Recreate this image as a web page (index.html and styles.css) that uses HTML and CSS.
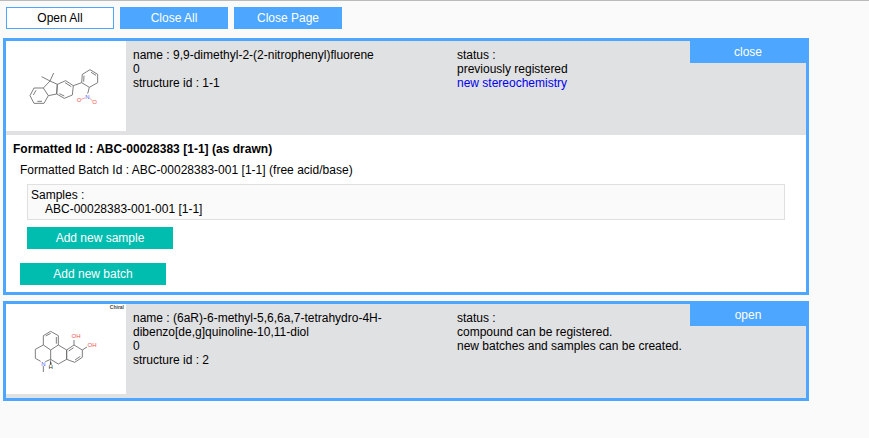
FILE: index.html
```html
<!DOCTYPE html>
<html lang="en">
<head>
    <meta charset="UTF-8">
    <meta name="viewport" content="width=device-width, initial-scale=1.0">
    <title>Register Compounds</title>
    <link rel="stylesheet" href="styles.css">
</head>
<body>
    <div class="toolbar">
        <button class="btn btn-outline">Open All</button>
        <button class="btn btn-blue">Close All</button>
        <button class="btn btn-blue">Close Page</button>
    </div>

    <!-- Compound 1 -->
    <div class="card">
        <button class="btn-toggle">close</button>
        <div class="card-head">
            <div class="structure">
                <svg class="mol" width="120" height="90" viewBox="-12 -12 360 270">
                    <g class="bonds">
                        <polygon points="60,152 72,129 100,129 115,152 102,175 72,175"/>
                        <polyline points="100,129 120,108 142,118 140,147 115,152"/>
                        <polyline points="95,95 120,108 131,84"/>
                        <polygon points="142,118 167,107 190,122 187,150 163,160 140,147"/>
                        <polyline points="190,122 215,113"/>
                        <polygon points="240,74 263,88 263,113 238,127 215,113 217,88"/>
                        <polyline points="238,127 233,146"/>
                        <polyline points="70,150 78,136"/>
                        <polyline points="82,169 96,169"/>
                        <polyline points="148,146 163,153"/>
                        <polyline points="165,113 184,125"/>
                        <polyline points="243,82 258,91"/>
                        <polyline points="221,110 222,92"/>
                    </g>
                    <g class="bonds-red">
                        <polyline points="225,159 214,163"/>
                        <polyline points="239,160 248,167"/>
                    </g>
                    <text class="atom atom-n" x="232" y="162" text-anchor="middle">N</text>
                    <text class="atom atom-o" x="207" y="171" text-anchor="middle">O</text>
                    <text class="atom atom-o" x="254" y="178" text-anchor="middle">O</text>
                </svg>
            </div>
            <div class="info-name">
                name : 9,9-dimethyl-2-(2-nitrophenyl)fluorene<br>
                0<br>
                structure id : 1-1
            </div>
            <div class="info-status">
                status :<br>
                previously registered<br>
                <span class="stereo">new stereochemistry</span>
            </div>
        </div>
        <div class="card-body">
            <div class="formatted-id">Formatted Id : ABC-00028383 [1-1] (as drawn)</div>
            <div class="batch">
                <div class="batch-id">Formatted Batch Id : ABC-00028383-001 [1-1] (free acid/base)</div>
                <div class="samples">
                    Samples :
                    <div class="sample-row">ABC-00028383-001-001 [1-1]</div>
                </div>
                <button class="btn-add btn-add-sample">Add new sample</button>
            </div>
            <button class="btn-add btn-add-batch">Add new batch</button>
        </div>
    </div>

    <!-- Compound 2 -->
    <div class="card">
        <button class="btn-toggle">open</button>
        <div class="card-head">
            <div class="structure">
                <span class="chiral">Chiral</span>
                <svg class="mol" width="120" height="90" viewBox="18 12 360 270">
                    <g class="bonds">
                        <polygon points="130,107 152,94 175,107 175,135 152,150 130,135"/>
                        <polyline points="130,135 106,148 106,175 122,184"/>
                        <polyline points="136,185 152,178 152,150"/>
                        <polyline points="130,198 130,216"/>
                        <polyline points="175,135 200,150 200,178 175,192 152,178"/>
                        <polygon points="200,150 222,135 247,150 247,172 224,187 200,178"/>
                        <polyline points="222,135 222,120"/>
                        <polyline points="247,150 261,141"/>
                        <polyline points="137,108 152,100"/>
                        <polyline points="169,111 169,131"/>
                        <polyline points="206,153 221,143"/>
                        <polyline points="241,169 225,180"/>
                    </g>
                    <polygon class="wedge" points="152,178 149,194 155,194"/>
                    <text class="atom atom-n" x="130" y="197" text-anchor="middle">N</text>
                    <text class="atom atom-h" x="152" y="206" text-anchor="middle">H</text>
                    <text class="atom atom-oh" x="228" y="114" text-anchor="middle">OH</text>
                    <text class="atom atom-oh" x="276" y="140" text-anchor="middle">OH</text>
                </svg>
            </div>
            <div class="info-name">
                name : (6aR)-6-methyl-5,6,6a,7-tetrahydro-4H-dibenzo[de,g]quinoline-10,11-diol<br>
                0<br>
                structure id : 2
            </div>
            <div class="info-status">
                status :<br>
                compound can be registered.<br>
                new batches and samples can be created.
            </div>
        </div>
    </div>
</body>
</html>
```

FILE: styles.css
```css
body {
    margin: 0;
    background: #fafafa;
    border-top: 1px solid #bbbbbb;
    font-family: "Liberation Sans", Arial, sans-serif;
    font-size: 12px;
    line-height: 14px;
    color: #000;
}
.toolbar {
    display: flex;
    gap: 6px;
    padding: 6px 6px 9px;
}
.btn {
    width: 108px;
    height: 22px;
    padding: 0;
    font-family: inherit;
    font-size: 12px;
    cursor: pointer;
}
.btn-outline {
    background: #fff;
    border: 1px solid #4da6ff;
    color: #000;
}
.btn-blue {
    background: #4da6ff;
    border: none;
    color: #fff;
}
.card {
    position: relative;
    width: 800px;
    margin: 0 0 6px 3px;
    border: 3px solid #4da6ff;
    background: #fff;
}
.btn-toggle {
    position: absolute;
    top: -3px;
    right: -3px;
    width: 119px;
    height: 25px;
    padding: 2px 3px 0 0;
    border: none;
    background: #4da6ff;
    color: #fff;
    font-family: inherit;
    font-size: 12px;
    cursor: pointer;
}
.card-head {
    display: flex;
    height: 94px;
    background: #e0e1e3;
}
.structure {
    position: relative;
    width: 120px;
    height: 90px;
    background: #fff;
}
.mol {
    display: block;
}
.mol .bonds {
    fill: none;
    stroke: #6a6a6a;
    stroke-width: 2.6;
}
.mol .bonds-red {
    fill: none;
    stroke: #e99;
    stroke-width: 2.6;
}
.mol .wedge {
    fill: #444;
}
.mol .atom {
    font-size: 18px;
    font-family: "Liberation Sans", Arial, sans-serif;
}
.mol .atom-n {
    fill: #5555ee;
}
.mol .atom-h {
    fill: #333;
}
.mol .atom-o,
.mol .atom-oh {
    fill: #ee5555;
}
.chiral {
    position: absolute;
    top: 0;
    right: 2px;
    font-size: 5px;
    font-weight: bold;
    line-height: 7px;
    color: #444;
}
.info-name {
    width: 268px;
    margin-left: 7px;
    padding-top: 7px;
}
.info-status {
    margin-left: 56px;
    padding-top: 7px;
}
.stereo {
    color: #0000ee;
}
.card-body {
    padding: 7px 0 7px 7px;
}
.formatted-id {
    font-weight: bold;
    letter-spacing: 0.02px;
}
.batch {
    margin-top: 7px;
    padding-left: 7px;
}
.batch-id {
    letter-spacing: 0.02px;
}
.samples {
    width: 750px;
    margin: 7px 0 7px 7px;
    padding: 3px;
    border: 1px solid #e0e0e0;
    background: #fafafa;
}
.sample-row {
    padding-left: 14px;
}
.btn-add {
    display: block;
    width: 146px;
    height: 22px;
    padding: 0;
    border: none;
    background: #00bdb0;
    color: #fff;
    font-family: inherit;
    font-size: 12px;
    cursor: pointer;
}
.btn-add-sample {
    margin-left: 7px;
}
.btn-add-batch {
    margin: 14px 0 0 7px;
}
```
